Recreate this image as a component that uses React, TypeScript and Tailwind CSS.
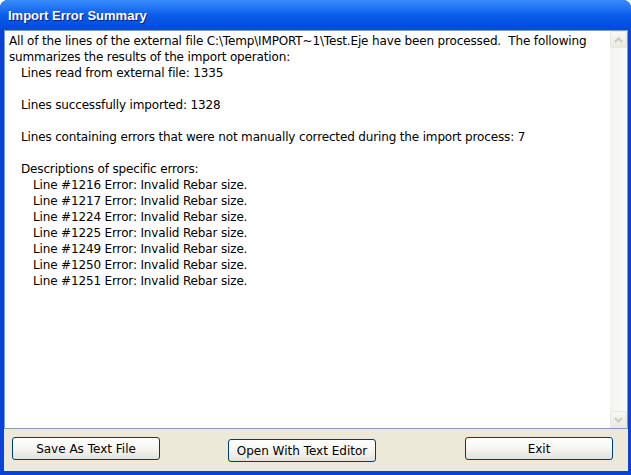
const errorLines = [1216, 1217, 1224, 1225, 1249, 1250, 1251];

const bodyFont = { fontFamily: '"DejaVu Sans", Verdana, sans-serif' };

function ScrollButton({ up }: { up: boolean }) {
  return (
    <div className="flex h-[17px] w-[17px] items-center justify-center rounded-[2px] border border-[#E8E8E0] bg-gradient-to-b from-[#F8F8F4] to-[#EAEAE2]">
      <svg width="9" height="6" viewBox="0 0 9 6">
        <path
          d={up ? "M1 5 L4.5 1.5 L8 5" : "M1 1 L4.5 4.5 L8 1"}
          fill="none"
          stroke="#C9CBBF"
          strokeWidth="2"
        />
      </svg>
    </div>
  );
}

function XpButton({ label, className }: { label: string; className?: string }) {
  return (
    <button
      className={`flex h-[23px] w-[148px] items-center justify-center rounded-[3px] border border-[#003C74] bg-gradient-to-b from-[#FFFFFF] via-[#F6F5F0] to-[#E3E2DA] text-[12px] text-black ${className ?? ""}`}
      style={bodyFont}
    >
      {label}
    </button>
  );
}

export default function App() {
  return (
    <div className="h-[475px] w-[631px] overflow-hidden rounded-t-[8px] bg-[#0842D6] flex flex-col">
      <div className="flex h-[30px] shrink-0 items-center bg-gradient-to-b from-[#3A8CFB] via-[#0A5DEB] to-[#0449D8] pl-[8px] pt-[1px]">
        <span
          className="text-[13px] font-bold text-white [text-shadow:1px_1px_0_#0A1F8A]"
          style={{ fontFamily: '"Liberation Sans", Arial, sans-serif' }}
        >
          Import Error Summary
        </span>
      </div>
      <div className="flex flex-1 flex-col bg-[#ECE9D8] ml-[4px] mr-[3px] mb-[4px]">
        <div className="flex flex-1 border border-[#7F9DB9] bg-white">
          <div
            className="flex-1 pl-[4px] pt-[2px] text-[12px] leading-[16px] tracking-[-0.15px] text-black whitespace-pre"
            style={bodyFont}
          >
            <div>All of the lines of the external file C:\Temp\IMPORT~1\Test.Eje have been processed.  The following</div>
            <div>summarizes the results of the import operation:</div>
            <div className="pl-[12px]">Lines read from external file: 1335</div>
            <div>&nbsp;</div>
            <div className="pl-[12px]">Lines successfully imported: 1328</div>
            <div>&nbsp;</div>
            <div className="pl-[12px]">Lines containing errors that were not manually corrected during the import process: 7</div>
            <div>&nbsp;</div>
            <div className="pl-[12px]">Descriptions of specific errors:</div>
            {errorLines.map((n) => (
              <div key={n} className="pl-[24px]">
                Line #{n} Error: Invalid Rebar size.
              </div>
            ))}
          </div>
          <div className="flex w-[17px] flex-col justify-between bg-gradient-to-r from-[#F3F3EF] to-[#FBFBF9]">
            <ScrollButton up />
            <ScrollButton up={false} />
          </div>
        </div>
        <div className="flex h-[42px] shrink-0 items-start pl-[8px] pt-[8px]">
          <XpButton label="Save As Text File" />
          <XpButton label="Open With Text Editor" className="ml-[68px] mt-[2px]" />
          <XpButton label="Exit" className="ml-[89px]" />
        </div>
      </div>
    </div>
  );
}
